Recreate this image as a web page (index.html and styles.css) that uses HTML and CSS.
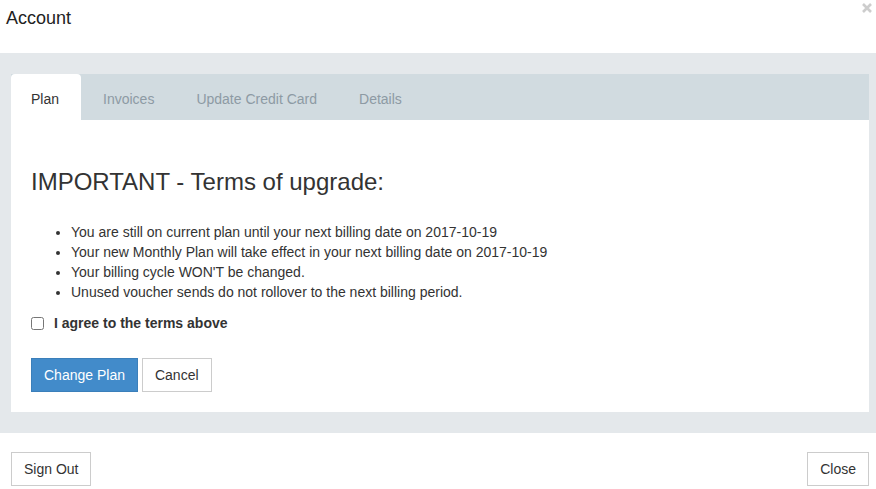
FILE: index.html
```html
<!DOCTYPE html>
<html>
<head>
<meta charset="utf-8">
<link rel="stylesheet" href="styles.css">
</head>
<body>
<div class="modal">
  <header class="modal-header">
    <h4 class="title">Account</h4>
    <svg class="close" width="10" height="10" viewBox="0 0 10 10" aria-label="close"><path d="M1 1 L9 9 M9 1 L1 9" stroke="#cdcdcd" stroke-width="2.6" stroke-linecap="butt"/></svg>
  </header>
  <main class="modal-body">
    <div class="panel">
      <nav class="tabs">
        <span class="tab active">Plan</span>
        <span class="tab">Invoices</span>
        <span class="tab">Update Credit Card</span>
        <span class="tab">Details</span>
      </nav>
      <section class="content">
        <h3 class="heading">IMPORTANT - Terms of upgrade:</h3>
        <ul class="terms">
          <li>You are still on current plan until your next billing date on 2017-10-19</li>
          <li>Your new Monthly Plan will take effect in your next billing date on 2017-10-19</li>
          <li>Your billing cycle WON'T be changed.</li>
          <li>Unused voucher sends do not rollover to the next billing period.</li>
        </ul>
        <label class="agree"><input type="checkbox" class="check"><span>I agree to the terms above</span></label>
        <div class="actions">
          <button class="btn btn-primary">Change Plan</button>
          <button class="btn">Cancel</button>
        </div>
      </section>
    </div>
  </main>
  <footer class="modal-footer">
    <button class="btn">Sign Out</button>
    <button class="btn">Close</button>
  </footer>
</div>
</body>
</html>
```
FILE: styles.css
```css
* { box-sizing: border-box; }
html, body { margin: 0; padding: 0; background: #fff; }
body {
  font-family: "Liberation Sans", Arial, sans-serif;
  font-size: 14px;
  line-height: 20px;
  color: #333;
  width: 876px;
  height: 489px;
  overflow: hidden;
}
.modal { display: flex; flex-direction: column; }
.modal-header {
  position: relative;
  height: 53px;
  padding: 0 6px;
}
.title {
  margin: 0;
  font-size: 18px;
  font-weight: normal;
  line-height: 20px;
  padding-top: 8px;
  color: #222;
}
.close {
  position: absolute;
  right: 4px;
  top: 3px;
}
.modal-body {
  background: #e4e8eb;
  padding: 21px 7px 21px 11px;
  height: 380px;
}
.panel {
  background: #fff;
  height: 338px;
}
.tabs {
  display: flex;
  background: #d1dbe0;
  height: 46px;
}
.tab {
  padding: 15px 20px 11px 20px;
  margin-right: 2px;
  color: #8d9aa4;
  border-radius: 4px 4px 0 0;
}
.tab.active { background: #fff; color: #333; padding-right: 22px; }
.content { padding: 49px 20px 20px 20px; }
.heading {
  margin: 0 0 10px;
  font-size: 24px;
  font-weight: normal;
  line-height: 26.4px;
  color: #333;
}
.terms {
  margin: 27px 0 11px;
  padding-left: 40px;
}
.agree {
  display: flex;
  align-items: center;
  font-weight: bold;
  height: 20px;
}
.check {
  width: 13px;
  height: 13px;
  margin: 0 10px 0 0;
}
.actions {
  margin-top: 25px;
  display: flex;
  gap: 4px;
}
.btn {
  font-family: "Liberation Sans", Arial, sans-serif;
  font-size: 14px;
  line-height: 20px;
  padding: 6px 12px;
  border: 1px solid #ccc;
  background: #fff;
  color: #333;
  border-radius: 0;
  height: 34px;
}
.btn-primary {
  background: #428bca;
  border-color: #3b7fba;
  color: #fff;
}
.modal-footer {
  display: flex;
  justify-content: space-between;
  padding: 19px 7px 0 11px;
}
```
